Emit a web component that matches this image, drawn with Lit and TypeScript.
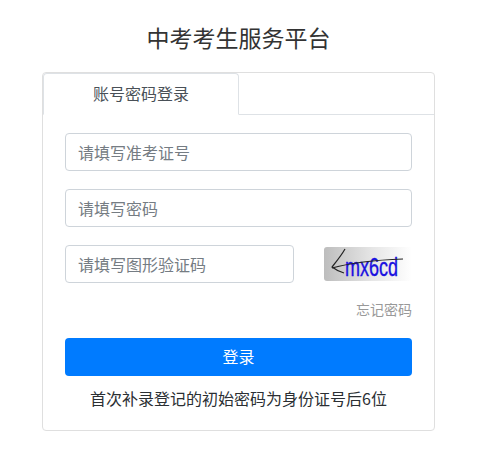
import { LitElement, html, css } from "lit";
import { customElement } from "lit/decorators.js";

@customElement("app-root")
export class AppRoot extends LitElement {
  static styles = css`
    :host {
      display: block;
      width: 497px;
      height: 466px;
      background: #fff;
      color: #212529;
      font-family: "Noto Sans CJK SC", "Liberation Sans", sans-serif;
      box-sizing: border-box;
      padding: 20px 62px 0 42px;
    }
    * { box-sizing: border-box; }
    .title {
      margin: 0;
      height: 36px;
      line-height: 34px;
      font-size: 23px;
      font-weight: 400;
      text-align: center;
      color: #333;
    }
    .card {
      margin-top: 16px;
      width: 393px;
      height: 359px;
      border: 1px solid #dfdfdf;
      border-radius: 4px;
      display: flex;
      flex-direction: column;
    }
    .tabs {
      height: 42px;
      flex: none;
      border-bottom: 1px solid #dee2e6;
      display: flex;
    }
    .tab {
      width: 196px;
      height: 42px;
      border: 1px solid #dee2e6;
      border-bottom-color: #fff;
      border-top-left-radius: 4px;
      border-top-right-radius: 4px;
      background: #fff;
      font-size: 16px;
      line-height: 38px;
      text-align: center;
      color: #495057;
    }
    .body {
      padding: 18px 22px 0 22px;
      display: flex;
      flex-direction: column;
    }
    .input {
      display: flex;
      align-items: center;
      height: 38px;
      padding: 0 12px 1px;
      border: 1px solid #ced4da;
      border-radius: 4px;
      font-size: 16px;
      color: #757c83;
      background: #fff;
      margin-bottom: 18px;
    }
    .captcha-row {
      display: flex;
      justify-content: space-between;
      align-items: center;
      height: 38px;
    }
    .captcha-row .input { width: 229px; margin: 0; }
    .captcha { width: 88px; height: 34px; display: block; overflow: visible; }
    .forgot {
      margin-top: 17px;
      height: 20px;
      line-height: 18px;
      font-size: 14px;
      text-align: right;
      color: #999;
    }
    .btn {
      margin-top: 18px;
      height: 38px;
      border-radius: 4px;
      background: #007bff;
      color: #fff;
      font-size: 16px;
      line-height: 37px;
      text-align: center;
    }
    .note {
      margin-top: 11px;
      height: 24px;
      line-height: 22px;
      font-size: 16px;
      text-align: center;
      color: #2b2f33;
    }
    .cap-text {
      font-family: "Liberation Sans", sans-serif;
      font-size: 20px;
      fill: #1a10e0;
      stroke: #1a10e0;
      stroke-width: 0.3px;
    }
  `;

  render() {
    return html`
      <h1 class="title">中考考生服务平台</h1>
      <div class="card">
        <div class="tabs"><div class="tab">账号密码登录</div></div>
        <div class="body">
          <div class="input">请填写准考证号</div>
          <div class="input">请填写密码</div>
          <div class="captcha-row">
            <div class="input">请填写图形验证码</div>
            <svg class="captcha" viewBox="0 0 88 34">
              <defs>
                <linearGradient id="g" x1="0" x2="1" y1="0" y2="0">
                  <stop offset="0" stop-color="#bdbdbd" />
                  <stop offset="0.55" stop-color="#e6e6e6" />
                  <stop offset="1" stop-color="#ffffff" />
                </linearGradient>
              </defs>
              <rect width="88" height="34" rx="3" fill="url(#g)" />
              <text class="cap-text" transform="translate(21 28.7) scale(0.9 1.25)">mx6cd</text>
              <path d="M21 2 C17 9 12 15 8 20 C12 23 16 25 20 26" fill="none" stroke="#222" stroke-width="1.2" />
              <path d="M8 21 C30 15 50 13 79 12" fill="none" stroke="#222" stroke-width="1.2" />
            </svg>
          </div>
          <div class="forgot">忘记密码</div>
          <div class="btn">登录</div>
          <div class="note">首次补录登记的初始密码为身份证号后6位</div>
        </div>
      </div>
    `;
  }
}
